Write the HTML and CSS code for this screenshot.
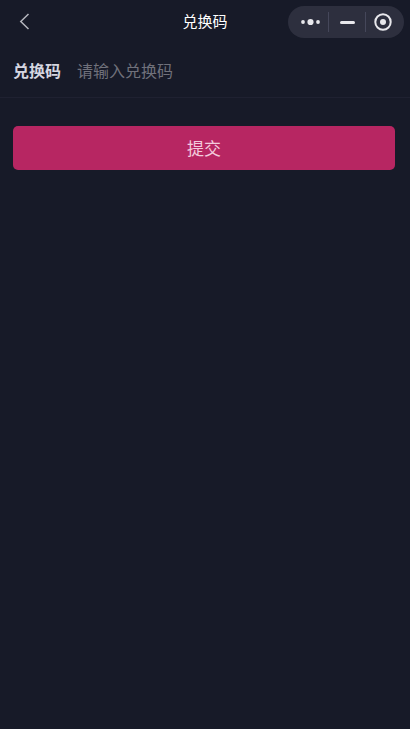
FILE: index.html
```html
<!DOCTYPE html>
<html lang="zh-CN">
<head>
    <meta charset="UTF-8">
    <meta name="viewport" content="width=device-width, initial-scale=1.0">
    <title>兑换码</title>
    <link rel="stylesheet" href="styles.css">
</head>
<body>

    <div class="nav">
        <svg class="back" width="12" height="18" viewBox="0 0 12 18">
            <path d="M9.5 1 L1.8 8.5 L9.5 16" fill="none" stroke="#b4b5bd" stroke-width="1.5"></path>
        </svg>
        <div class="nav-title">兑换码</div>
        <div class="capsule">
            <div class="capsule-part part-more">
                <svg width="19" height="8" viewBox="0 0 19 8">
                    <circle cx="2" cy="4" r="1.9" fill="#e8e8ec"></circle>
                    <circle cx="9.5" cy="4" r="3.1" fill="#e8e8ec"></circle>
                    <circle cx="17" cy="4" r="1.9" fill="#e8e8ec"></circle>
                </svg>
            </div>
            <div class="capsule-line"></div>
            <div class="capsule-part part-minus">
                <div class="minus"></div>
            </div>
            <div class="capsule-line"></div>
            <div class="capsule-part part-close">
                <svg width="18" height="18" viewBox="0 0 18 18">
                    <circle cx="9" cy="9" r="7.7" fill="none" stroke="#e8e8ec" stroke-width="2"></circle>
                    <circle cx="9" cy="9" r="3" fill="#e8e8ec"></circle>
                </svg>
            </div>
        </div>
    </div>

    <div class="form-row">
        <div class="form-label">兑换码</div>
        <div class="form-placeholder">请输入兑换码</div>
    </div>

    <div class="submit-wrap">
        <button class="submit">提交</button>
    </div>

</body>
</html>
```

FILE: styles.css
```css
* {
    margin: 0;
    padding: 0;
    box-sizing: border-box;
}
html, body {
    height: 100%;
}
body {
    background-color: #171a28;
    font-family: "Liberation Sans", "Noto Sans CJK SC", sans-serif;
}
.nav {
    position: relative;
    display: flex;
    align-items: center;
    justify-content: space-between;
    height: 44px;
    padding: 0 6px 0 19px;
}
.nav-title {
    position: absolute;
    left: 0;
    right: 0;
    padding-bottom: 3px;
    text-align: center;
    font-size: 15px;
    color: #ffffff;
    pointer-events: none;
}
.capsule {
    display: flex;
    align-items: center;
    width: 116px;
    height: 32px;
    border-radius: 16px;
    background-color: #2d2f3e;
}
.capsule-part {
    display: flex;
    align-items: center;
    justify-content: center;
}
.part-more {
    width: 40px;
    padding-left: 4px;
}
.part-minus {
    width: 36px;
}
.part-close {
    flex: 1;
    padding-right: 4px;
}
.capsule-line {
    width: 1px;
    height: 20px;
    background-color: #45475a;
}
.minus {
    width: 15px;
    height: 3px;
    border-radius: 2px;
    background-color: #e8e8ec;
}
.form-row {
    display: flex;
    align-items: center;
    gap: 16px;
    height: 54px;
    padding: 0 13px 2px;
    border-bottom: 1px solid #1f2131;
}
.form-label {
    font-size: 16px;
    font-weight: bold;
    color: #d5d6e0;
}
.form-placeholder {
    font-size: 16px;
    color: #70717b;
}
.submit-wrap {
    padding: 28px 15px 0 13px;
}
.submit {
    display: block;
    width: 100%;
    height: 44px;
    padding-bottom: 2px;
    border: none;
    border-radius: 5px;
    background-color: #b72662;
    color: #f3cadc;
    font-family: inherit;
    font-size: 17px;
}
```
